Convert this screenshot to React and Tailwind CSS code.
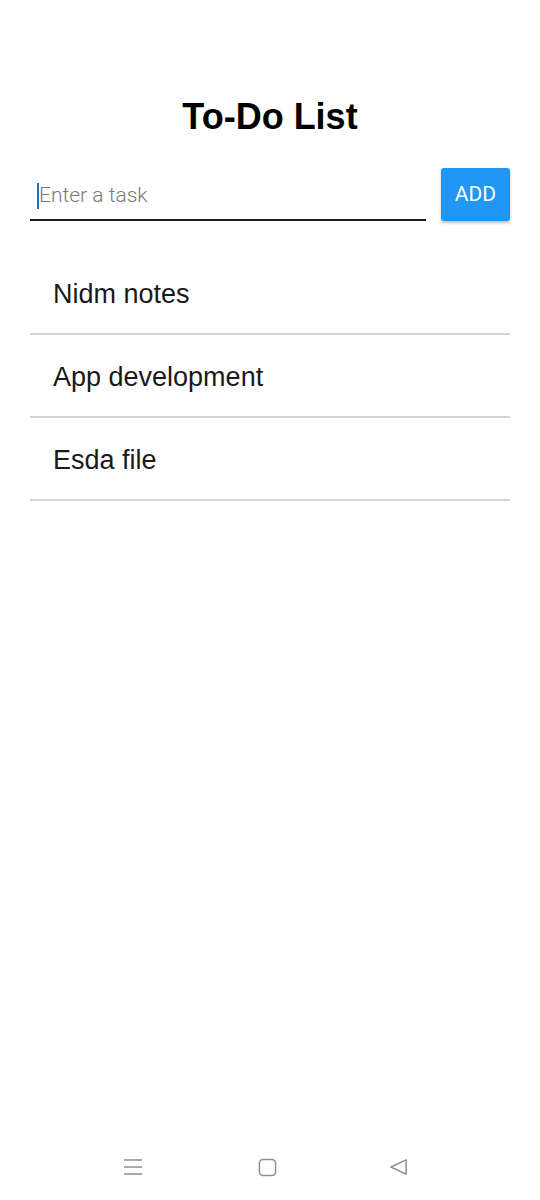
import React from "react";

export default function App() {
  const tasks = ["Nidm notes", "App development", "Esda file"];
  return (
    <div className="w-[540px] h-[1200px] bg-white flex flex-col font-['Roboto',sans-serif]">
      <div className="flex-1 px-[30px]">
        <h1 className="mt-[94px] text-center text-[36px] leading-[46px] font-bold text-black font-['Liberation_Sans',sans-serif]">
          To-Do List
        </h1>
        <div className="mt-[28px] flex items-stretch gap-[15px]">
          <div className="flex-1 h-[53px] border-b-2 border-[#1a1a1a] flex items-center pl-[7px] pt-[5px]">
            <span className="w-[2px] h-[26px] bg-[#1e6fb8]" />
            <span className="text-[21px] text-[#7a7a7a] font-light">Enter a task</span>
          </div>
          <button className="w-[69px] h-[53px] bg-[#2196f3] text-white text-[21px] rounded-[3px] shadow-[0_2px_3px_rgba(0,0,0,0.25)]">
            ADD
          </button>
        </div>
        <ul className="mt-[31px]">
          {tasks.map((t) => (
            <li
              key={t}
              className="h-[83px] border-b-2 border-[#d4d4d4] flex items-center pl-[23px] pt-[3px] text-[27px] text-[#1a1a1a] font-normal font-['Liberation_Sans',sans-serif]"
            >
              {t}
            </li>
          ))}
        </ul>
      </div>
      <div className="h-[48px] mb-[9px] flex items-center pl-[123px] gap-[115px]">
        <svg width="20" height="18" viewBox="0 0 20 18">
          <path d="M1 2h18M1 9h18M1 16h18" stroke="#8f8f8f" strokeWidth="1.6" fill="none" />
        </svg>
        <svg width="19" height="19" viewBox="0 0 20 20">
          <rect x="1.5" y="1.5" width="17" height="17" rx="4" stroke="#8f8f8f" strokeWidth="1.6" fill="none" />
        </svg>
        <svg width="19" height="18" viewBox="0 0 20 18" className="-ml-[3px]">
          <path d="M18 1.5L2 9l16 7.5z" stroke="#8f8f8f" strokeWidth="1.6" fill="none" strokeLinejoin="round" />
        </svg>
      </div>
    </div>
  );
}
